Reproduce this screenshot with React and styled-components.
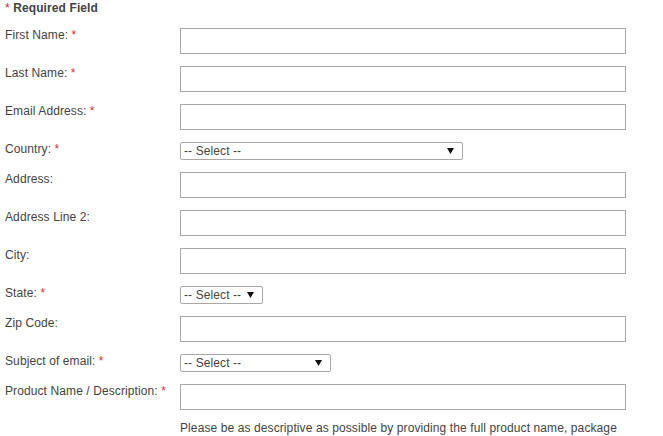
import React from "react"
import styled, { createGlobalStyle } from "styled-components"

const GlobalStyle = createGlobalStyle`
  body {
    margin: 0;
    background: #fff;
    font-family: "Liberation Sans", Arial, sans-serif;
    font-size: 12px;
    letter-spacing: 0.1px;
    color: #444;
  }
`

const fields = [
  { label: "First Name:", required: true, type: "text" },
  { label: "Last Name:", required: true, type: "text" },
  { label: "Email Address:", required: true, type: "text" },
  { label: "Country:", required: true, type: "select", width: 283 },
  { label: "Address:", type: "text" },
  { label: "Address Line 2:", type: "text" },
  { label: "City:", type: "text" },
  { label: "State:", required: true, type: "select", width: 83 },
  { label: "Zip Code:", type: "text" },
  { label: "Subject of email:", required: true, type: "select", width: 151 },
  { label: "Product Name / Description:", required: true, type: "text" },
]

const App = () => {
  return (
    <>
      <GlobalStyle />
      <Form>
        <Legend>
          <Star>*</Star> Required Field
        </Legend>
        {fields.map(f => (
          <Row key={f.label}>
            <Label>
              {f.label}
              {f.required && <Star> *</Star>}
            </Label>
            {f.type === "text" ? (
              <TextInput type="text" />
            ) : (
              <SelectBox $width={f.width}>
                <span>-- Select --</span>
                <Arrow viewBox="0 0 7 6">
                  <path d="M0 0h7L3.5 6z" fill="#111" />
                </Arrow>
              </SelectBox>
            )}
          </Row>
        ))}
        <Help>
          Please be as descriptive as possible by providing the full product
          name, package
        </Help>
      </Form>
    </>
  )
}

const Form = styled.div`
  padding: 1px 0 0 5px;
  width: 621px;
`

const Legend = styled.div`
  font-weight: bold;
  line-height: 14px;
  margin-bottom: 13px;
`

const Star = styled.span`
  color: #d03030;
  font-weight: normal;
`

const Row = styled.div`
  display: grid;
  grid-template-columns: 175px 1fr;
  align-items: start;
  margin-bottom: 12px;
`

const Label = styled.label`
  line-height: 14px;
  white-space: nowrap;
`

const TextInput = styled.input`
  box-sizing: border-box;
  height: 26px;
  width: 446px;
  margin: 0;
  border: 1px solid #a9a9a9;
  background: #fff;
  padding: 2px 4px;
  font: inherit;
`

const SelectBox = styled.div`
  box-sizing: border-box;
  height: 18px;
  width: ${p => p.$width}px;
  border: 1px solid #a9a9a9;
  border-radius: 2px;
  display: flex;
  align-items: center;
  justify-content: space-between;
  padding: 0 8px 0 3px;
  color: #444;
  line-height: 16px;
  white-space: nowrap;
`

const Arrow = styled.svg`
  width: 7px;
  height: 6px;
`

const Help = styled.div`
  margin-left: 175px;
  margin-top: -1px;
  line-height: 14px;
  white-space: nowrap;
`

export default App
